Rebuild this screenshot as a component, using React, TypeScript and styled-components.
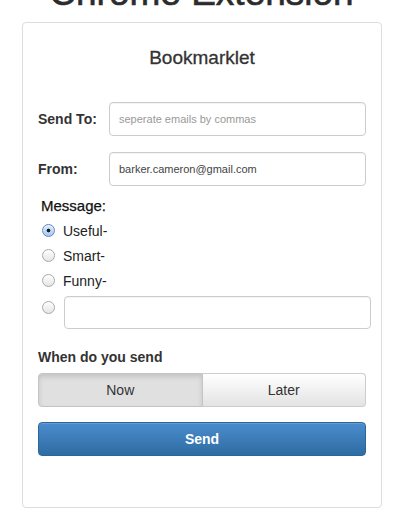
import { useState } from "react";
import styled, { createGlobalStyle } from "styled-components";

const GlobalStyle = createGlobalStyle`
  html, body {
    margin: 0;
    padding: 0;
    background: #fff;
    font-family: "Liberation Sans", Helvetica, Arial, sans-serif;
    color: #333;
    overflow: hidden;
  }
`;

const Page = styled.div`
  width: 400px;
  height: 522px;
  display: flex;
  flex-direction: column;
  align-items: flex-start;
`;

const PageTitle = styled.h1`
  align-self: stretch;
  margin: -18px 0 0;
  padding-left: 3px;
  height: 22px;
  line-height: 22px;
  font-size: 37px;
  font-weight: normal;
  text-align: center;
  color: #2b2b2b;
  -webkit-text-stroke: 0.6px #2b2b2b;
  white-space: nowrap;
`;

const Card = styled.div`
  box-sizing: border-box;
  width: 360px;
  height: 486px;
  margin: 18px 0 0 22px;
  padding: 0 15px;
  border: 1px solid #ddd;
  border-radius: 4px;
  display: flex;
  flex-direction: column;
`;

const CardTitle = styled.h3`
  margin: 25px 0 0;
  line-height: 20px;
  font-size: 19px;
  font-weight: normal;
  text-align: center;
  color: #333;
  -webkit-text-stroke: 0.3px #333;
`;

const FieldRow = styled.div<{ $gap: number }>`
  display: flex;
  align-items: center;
  height: 34px;
  margin-top: ${({ $gap }) => $gap}px;
`;

const FieldLabel = styled.label`
  width: 71px;
  flex-shrink: 0;
  font-size: 14px;
  font-weight: bold;
  color: #333;
`;

const TextInput = styled.input`
  box-sizing: border-box;
  flex: 1;
  min-width: 0;
  height: 34px;
  padding: 0 9px;
  border: 1px solid #ccc;
  border-radius: 4px;
  box-shadow: inset 0 1px 1px rgba(0, 0, 0, 0.05);
  font-family: inherit;
  font-size: 11px;
  color: #444;
  outline: none;

  &::placeholder {
    color: #999;
  }
`;

const MessageGroup = styled.div`
  display: flex;
  flex-direction: column;
  margin: 10px -5px 0 3px;
`;

const GroupLabel = styled.div`
  line-height: 20px;
  font-size: 15px;
  color: #111;
  -webkit-text-stroke: 0.25px #111;
`;

const RadioList = styled.div`
  display: flex;
  flex-direction: column;
  margin-top: 2px;
`;

const RadioRow = styled.label`
  display: flex;
  align-items: center;
  gap: 8px;
  height: 25px;
  font-size: 14px;
  color: #222;
`;

const CustomRow = styled.div`
  display: flex;
  align-items: flex-start;
  gap: 9px;
  margin-top: 3px;
`;

const Radio = styled.input.attrs({ type: "radio" })<{ $top?: number }>`
  appearance: none;
  box-sizing: border-box;
  flex-shrink: 0;
  width: 13px;
  height: 13px;
  margin: ${({ $top }) => $top ?? 0}px 0 0 1px;
  border: 1px solid #a8a8a8;
  border-radius: 50%;
  background: linear-gradient(#fdfdfd, #e6e6e6);
  box-shadow: inset 0 1px 1px rgba(255, 255, 255, 0.8);

  &:checked {
    border-color: #5b86c4;
    background: radial-gradient(circle, #1e1e1e 0 1.6px, transparent 2.2px),
      linear-gradient(#dbe9fb, #a9c9f1);
  }
`;

const CustomInput = styled(TextInput)`
  height: 33px;
`;

const SectionLabel = styled.div`
  margin-top: 18px;
  line-height: 20px;
  font-size: 14px;
  font-weight: bold;
  color: #333;
`;

const Segmented = styled.div`
  display: flex;
  margin-top: 6px;
  height: 34px;
`;

const SegmentButton = styled.button<{ $active: boolean }>`
  flex: 1;
  height: 34px;
  border: 1px solid #ccc;
  font-family: inherit;
  font-size: 14px;
  color: #333;
  cursor: pointer;
  background: ${({ $active }) =>
    $active ? "#e0e0e0" : "linear-gradient(#ffffff, #e3e3e3)"};
  box-shadow: ${({ $active }) =>
    $active ? "inset 0 3px 5px rgba(0, 0, 0, 0.125)" : "none"};

  &:first-child {
    border-radius: 4px 0 0 4px;
    border-color: #c4c4c4;
  }
  &:last-child {
    border-radius: 0 4px 4px 0;
    border-left: none;
  }
`;

const SendButton = styled.button`
  margin-top: 15px;
  height: 34px;
  border: 1px solid #2b669a;
  border-radius: 4px;
  background: linear-gradient(#4a8ccc, #2f6ca3);
  box-shadow: inset 0 1px 0 rgba(255, 255, 255, 0.15);
  font-family: inherit;
  font-size: 14px;
  font-weight: bold;
  color: #fff;
  cursor: pointer;
`;

const options = ["Useful-", "Smart-", "Funny-"];

function App() {
  const [choice, setChoice] = useState("Useful-");
  const [when, setWhen] = useState("Now");

  return (
    <Page>
      <GlobalStyle />
      <PageTitle>Chrome Extension</PageTitle>
      <Card>
        <CardTitle>Bookmarklet</CardTitle>
        <FieldRow $gap={34}>
          <FieldLabel>Send To:</FieldLabel>
          <TextInput placeholder="seperate emails by commas" />
        </FieldRow>
        <FieldRow $gap={16}>
          <FieldLabel>From:</FieldLabel>
          <TextInput defaultValue="barker.cameron@gmail.com" />
        </FieldRow>
        <MessageGroup>
          <GroupLabel>Message:</GroupLabel>
          <RadioList>
            {options.map((o) => (
              <RadioRow key={o}>
                <Radio
                  name="msg"
                  checked={choice === o}
                  onChange={() => setChoice(o)}
                />
                {o}
              </RadioRow>
            ))}
            <CustomRow>
              <Radio
                name="msg"
                $top={5}
                checked={choice === "custom"}
                onChange={() => setChoice("custom")}
              />
              <CustomInput />
            </CustomRow>
          </RadioList>
        </MessageGroup>
        <SectionLabel>When do you send</SectionLabel>
        <Segmented>
          {["Now", "Later"].map((w) => (
            <SegmentButton key={w} $active={when === w} onClick={() => setWhen(w)}>
              {w}
            </SegmentButton>
          ))}
        </Segmented>
        <SendButton>Send</SendButton>
      </Card>
    </Page>
  );
}

export default App;
